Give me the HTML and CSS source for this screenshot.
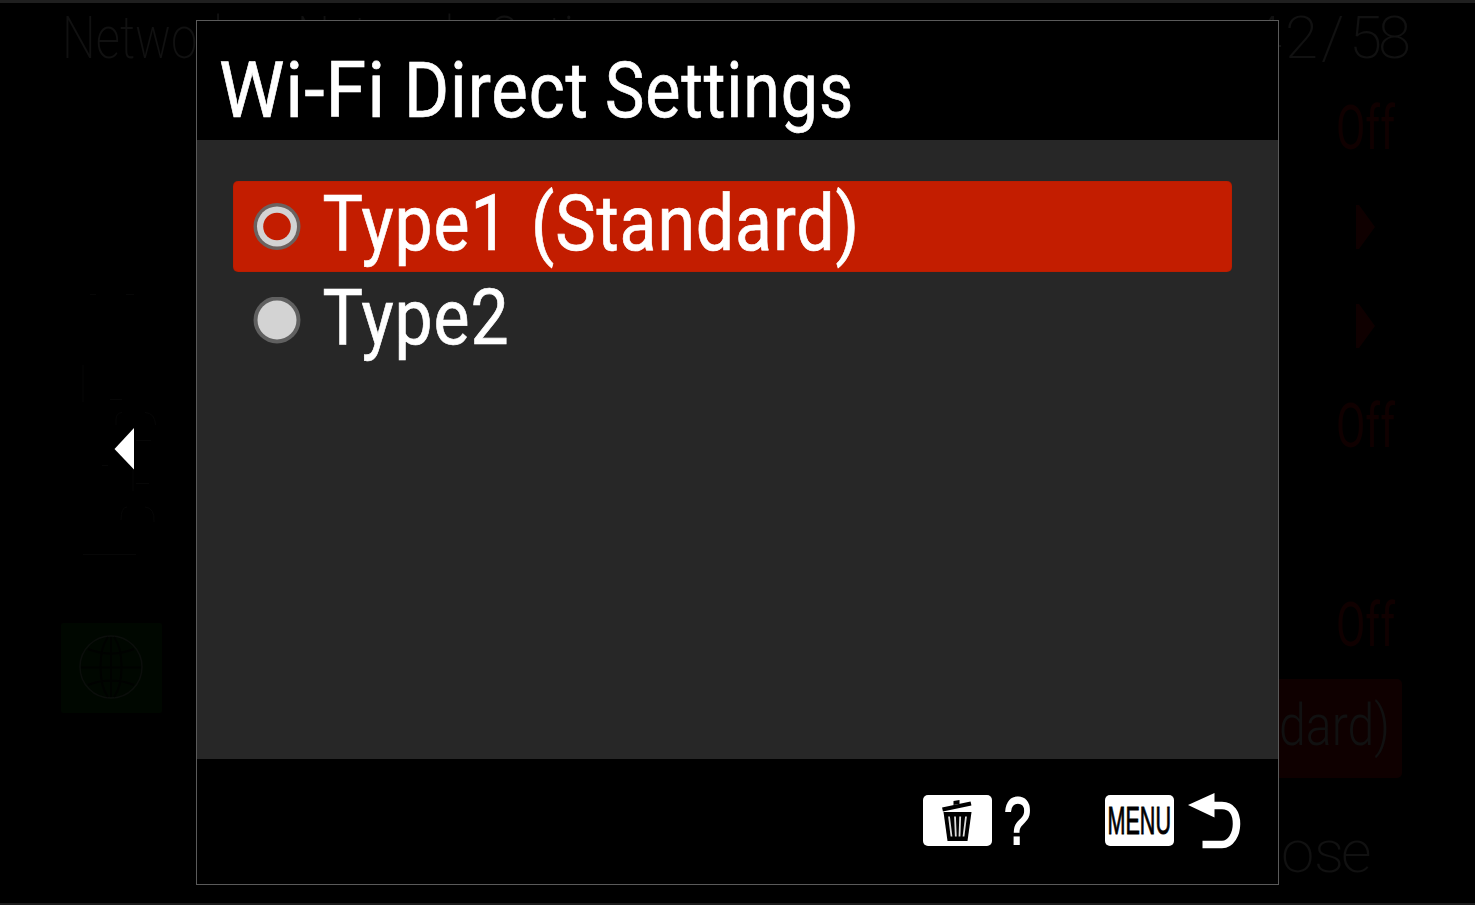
FILE: index.html
```html
<!DOCTYPE html>
<html lang="en">
<head>
<meta charset="utf-8">
<title>Wi-Fi Direct Settings</title>
<link rel="stylesheet" href="styles.css">
</head>
<body>
<div class="screen">
  <svg class="backdrop" width="1475" height="905" viewBox="0 0 1475 905" aria-hidden="true">
    <g class="dim-text">
      <text x="62" y="58" textLength="174" lengthAdjust="spacingAndGlyphs">Network</text>
      <text x="297" y="58" textLength="170" lengthAdjust="spacingAndGlyphs">Network</text>
      <text x="488" y="58" textLength="140" lengthAdjust="spacingAndGlyphs">Option</text>
      <text x="1249 1285 1321 1349 1378" y="58">42/58</text>
      <text x="1220 1250 1281 1314 1341" y="872">Close</text>
    </g>
    <g class="dim-off">
      <text x="1336" y="149" textLength="59" lengthAdjust="spacingAndGlyphs">Off</text>
      <text x="1336" y="447" textLength="59" lengthAdjust="spacingAndGlyphs">Off</text>
      <text x="1336" y="646" textLength="59" lengthAdjust="spacingAndGlyphs">Off</text>
    </g>
    <path class="dim-red" d="M1356 205l3 0 16 22-16 22-3 0zM1356 304l3 0 16 22-16 22-3 0z"/>
    <rect class="dim-red" x="1240" y="679" width="162" height="99" rx="5"/>
    <text class="dim-value" x="1279" y="745" textLength="111" lengthAdjust="spacingAndGlyphs">dard)</text>
    <rect class="dim-green" x="61" y="623" width="101" height="90" rx="2"/>
    <g class="globe">
      <circle class="globe-rim" cx="111" cy="667" r="31"/>
      <path d="M81 667.500H141M111 637V697M88 649Q111 658 134 649M88 685Q111 676 134 685M108 637C98 650 98 684 108 697M114 637C124 650 124 684 114 697"/>
    </g>
    <path class="traces" d="M90 294.500H96M126 294.500H134M83 365V402M110 399.500H122M116 425V420Q116 413 122 412.500M145 412.500Q155 413 155.500 425M136 440.500H151M133 470V491M136 483.500H149M102 465.500H108M83 554.500H136M121 520Q121 507 127 507M145 507Q155 508 154 522"/>
    <path class="back-arrow" d="M114.500 449L134 428V469.500Z"/>
  </svg>

  <main class="dialog">
    <header class="dialog-header">
      <svg class="label" width="660" height="118" role="heading">
        <text x="22" y="96" textLength="167" lengthAdjust="spacingAndGlyphs">Wi-Fi</text>
        <text x="207" y="96" textLength="185" lengthAdjust="spacingAndGlyphs">Direct</text>
        <text x="408" y="96" textLength="249" lengthAdjust="spacingAndGlyphs">Settings</text>
      </svg>
    </header>
    <section class="options">
      <div class="option selected">
        <svg class="radio" width="48" height="48" viewBox="0 0 48 48">
          <circle cx="24" cy="23.500" r="23.500" fill="#6c625f"/>
          <circle cx="24" cy="23.500" r="20" fill="#d3d3d3"/>
          <circle cx="24" cy="23.500" r="13.800" fill="#c31d00"/>
        </svg>
        <svg class="label" width="550" height="90">
          <text x="0.500" y="68" textLength="187" lengthAdjust="spacingAndGlyphs">Type1</text>
          <text x="209" y="68" textLength="329" lengthAdjust="spacingAndGlyphs">(Standard)</text>
        </svg>
      </div>
      <div class="option">
        <svg class="radio" width="48" height="48" viewBox="0 0 48 48">
          <circle cx="24" cy="23" r="23.500" fill="#606060"/>
          <circle cx="24" cy="23" r="19.500" fill="#d3d3d3"/>
        </svg>
        <svg class="label" width="550" height="90">
          <text x="0.500" y="67.500" textLength="187" lengthAdjust="spacingAndGlyphs">Type2</text>
        </svg>
      </div>
    </section>
    <footer class="dialog-footer">
      <div class="hint">
        <svg class="key" width="69" height="51" viewBox="0 0 69 51">
          <path d="M19.500 14.500L48 8.500" stroke="#000" stroke-width="4"/>
          <path d="M30.500 10l0-4 6-1v4z" fill="#000"/>
          <path d="M20.500 17H48.500L44.500 46H24.500Z" fill="#000"/>
          <path d="M26 21.500L28.500 41.500M32 21.500L32.800 41.500M37.200 21.500L36.500 41.500M43 21.500L40.500 41.500" stroke="#ddd" stroke-width="1.800"/>
        </svg>
        <svg class="label help" width="36" height="60">
          <text x="0" y="52" textLength="27" lengthAdjust="spacingAndGlyphs">?</text>
        </svg>
      </div>
      <div class="hint">
        <svg class="key" width="69" height="51" viewBox="0 0 69 51">
          <text x="2.500" y="38.500" textLength="63.500" lengthAdjust="spacingAndGlyphs">MENU</text>
        </svg>
        <svg class="return" width="53" height="58" viewBox="0 0 53 58">
          <path d="M26 13.500H34C43.500 13.500 48.500 21 48.500 32C48.500 42 43 52.500 34 52.500H14.500" fill="none" stroke="#fff" stroke-width="7.500"/>
          <path d="M0 13L26.500 1V25.500Z" fill="#fff"/>
        </svg>
      </div>
    </footer>
  </main>
</div>
</body>
</html>
```
FILE: styles.css
```css
* { box-sizing: border-box; }

body {
  margin: 0;
  background: #000;
  font-family: Roboto, "Liberation Sans", Arial, sans-serif;
}

svg { display: block; flex: none; }

.screen {
  position: relative;
  width: 1475px;
  height: 905px;
  overflow: hidden;
  padding: 17px 0 0 196px;
  background: #000;
  border-top: 3px solid #1f1f1f;
  border-bottom: 2px solid #1c1c1c;
}

.backdrop { position: absolute; left: 0; top: -3px; }

.dim-text { font: 200 60px Roboto, sans-serif; fill: #111; }
.dim-off { font: 400 61px Roboto, sans-serif; fill: #100000; }
.dim-value { font: 300 58px Roboto, sans-serif; fill: #111; }
.dim-red { fill: #0f0000; }
.dim-green { fill: #000700; }
.globe { fill: none; stroke: #000200; stroke-width: 2; }
.globe-rim { stroke: #0b0e0b; stroke-width: 1.5; }
.traces { fill: none; stroke: #070707; }
.back-arrow { fill: #fff; }

.dialog {
  position: relative;
  display: flex;
  flex-direction: column;
  width: 1083px;
  height: 865px;
  border: 1px solid #5a5a5a;
  background: #000;
}

.dialog-header { height: 119px; }

.label {
  overflow: visible;
  font-size: 77.5px;
  letter-spacing: 1px;
  fill: #fff;
  stroke: #fff;
  stroke-width: 0.7px;
}

.options {
  flex: none;
  height: 619px;
  padding: 41px 46px 0 36px;
  background: #272727;
}

.option {
  display: flex;
  align-items: center;
  gap: 21px;
  height: 91px;
  margin-bottom: 3px;
  padding-left: 20px;
  border-radius: 5px;
}

.option.selected { background: #c31d00; box-shadow: inset 0 0 1px #702000; }

.dialog-footer {
  display: flex;
  justify-content: flex-end;
  flex: 1;
  gap: 65px;
  padding: 33px 37px 0 0;
}

.hint { display: flex; align-items: flex-start; gap: 14px; }
.hint:first-child { gap: 12px; }

.key {
  margin-top: 3px;
  border-radius: 5px;
  background: #fff;
  font-family: "Liberation Sans", Arial, sans-serif;
  font-size: 38px;
  fill: #000;
}

.key text { stroke: #000; stroke-width: 0.9px; }

.help {
  font-family: "Liberation Sans", Arial, sans-serif;
  font-size: 67px;
  letter-spacing: 0;
  stroke-width: 2px;
}
```
